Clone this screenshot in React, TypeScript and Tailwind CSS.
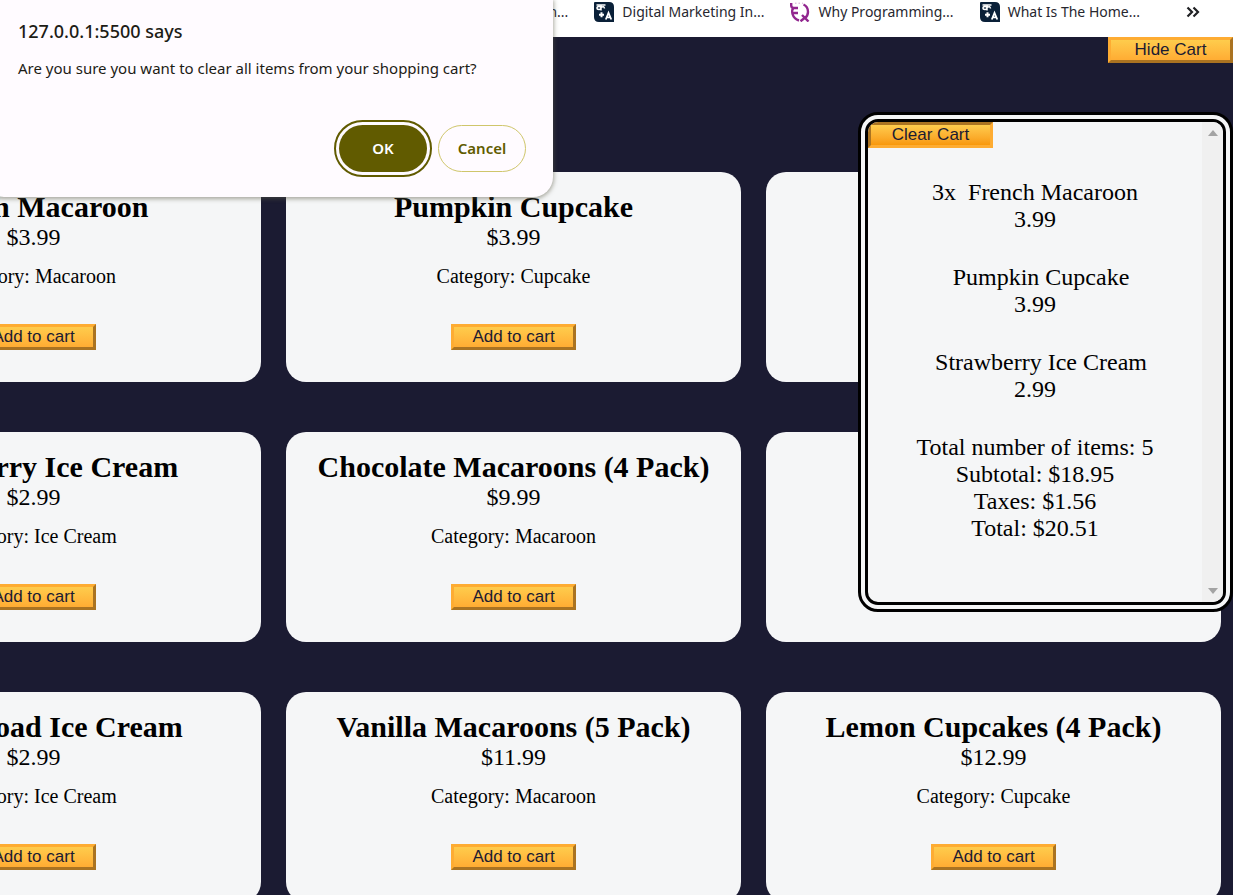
import { ReactNode } from "react";

type Product = { name: string; price: string; category: string };

// A null entry is an empty card that keeps its place in the grid behind the cart.
const products: (Product | null)[] = [
  { name: "French Macaroon", price: "3.99", category: "Macaroon" },
  { name: "Pumpkin Cupcake", price: "3.99", category: "Cupcake" },
  null,
  { name: "Strawberry Ice Cream", price: "2.99", category: "Ice Cream" },
  { name: "Chocolate Macaroons (4 Pack)", price: "9.99", category: "Macaroon" },
  null,
  { name: "Rocky Road Ice Cream", price: "2.99", category: "Ice Cream" },
  { name: "Vanilla Macaroons (5 Pack)", price: "11.99", category: "Macaroon" },
  { name: "Lemon Cupcakes (4 Pack)", price: "12.99", category: "Cupcake" },
];

const cartItems = [
  { count: 3, name: "French Macaroon", price: "3.99" },
  { count: 1, name: "Pumpkin Cupcake", price: "3.99" },
  { count: 1, name: "Strawberry Ice Cream", price: "2.99" },
];

function ShopButton({ children, pressed = false }: { children: ReactNode; pressed?: boolean }) {
  const look = pressed
    ? "to-[#f89808] [border-style:inset]"
    : "to-[#ffac33] [border-style:outset]";
  return (
    <button
      type="button"
      className={`block h-[26px] w-[125px] border-3 border-[#feac32] bg-linear-to-b from-[#fecc4c] font-['Liberation_Sans',sans-serif] text-[17px] leading-5 text-[#1b1b32] ${look}`}
    >
      {children}
    </button>
  );
}

function ProductCard({ name, price, category }: Product) {
  return (
    <article className="flex h-[210px] flex-col items-center rounded-[20px] bg-[#f5f6f7] pt-[19px]">
      <h2 className="text-[30px] leading-8 font-bold whitespace-nowrap">{name}</h2>
      <p className="text-2xl leading-7">${price}</p>
      <p className="mt-[13px] text-xl leading-6">Category: {category}</p>
      <div className="mt-9">
        <ShopButton>Add to cart</ShopButton>
      </div>
    </article>
  );
}

function TranslateIcon() {
  return (
    <svg viewBox="0 0 20 20" className="size-5 shrink-0" aria-hidden="true">
      <path d="M1 0h14q5 0 5 5v15H5q-5 0-5-5V1q0-1 1-1z" fill="#0a2038" />
      <path d="M2.5 3h9M7 3v5.500M3 6q0-1.500 2-1.500T7 6q0 1.500-2 1.500T3 6M7 5.500q3-2 3.500 1" stroke="#fff" strokeWidth="1.500" fill="none" />
      <path d="M7.500 10.200v5M5 12.700h5" stroke="#fff" strokeWidth="2" />
      <path d="M11.800 17.500 14.500 10.800 17.300 17.500M12.800 15.300h3.500" stroke="#fff" strokeWidth="1.800" fill="none" />
    </svg>
  );
}

function QuestionIcon() {
  return (
    <svg viewBox="0 0 20 20" className="size-5 shrink-0" aria-hidden="true" fill="none" stroke="#92278f" strokeWidth="2.400">
      <path d="M1.200 1v2.500Q1.200 6 4 6h4M3.500 5.500Q1.500 8 2.500 12q1.500 5 6.500 6.500M2.500 11H8" />
      <path d="M13.500 2.500q4.500 2 4.500 7.500 0 4-3.500 6.500M12 13l6.500 6.500M10.500 19.300l5-4" />
      <path d="M5 1.200h1.500M8.500 1.200H10M12 1.200h1" strokeWidth="1" opacity="0.400" />
    </svg>
  );
}

function Bookmark({ icon, children }: { icon: ReactNode; children: string }) {
  return (
    <a href="#" className="flex items-center gap-2 whitespace-nowrap">
      {icon}
      <span>{children}</span>
    </a>
  );
}

function BookmarksBar() {
  return (
    <nav
      aria-label="Bookmarks"
      className="flex h-[37px] items-start justify-end gap-[26px] bg-white pr-[33px] font-['Noto_Sans',sans-serif] text-sm leading-6 text-[#27272f]"
    >
      <a href="#">n...</a>
      <Bookmark icon={<TranslateIcon />}>Digital Marketing In...</Bookmark>
      <Bookmark icon={<QuestionIcon />}>Why Programming...</Bookmark>
      <Bookmark icon={<TranslateIcon />}>What Is The Home...</Bookmark>
      <button type="button" aria-label="More bookmarks" className="ml-5 flex h-6 items-center">
        <svg viewBox="0 0 14 12" className="h-3 w-[14px]" fill="none" stroke="#202124" strokeWidth="2.200">
          <path d="M1.500 1.500 6 6l-4.500 4.500M7.500 1.500 12 6l-4.500 4.500" />
        </svg>
      </button>
    </nav>
  );
}

function Cart() {
  return (
    <aside className="absolute top-[75px] right-0 flex h-[500px] w-[375px] overflow-hidden rounded-[20px] border-10 border-double border-black bg-[#f5f6f7]">
      <div className="flex-1">
        <ShopButton pressed>Clear Cart</ShopButton>
        <div className="mt-[31px] text-center text-2xl leading-[27px]">
          <ul className="flex flex-col gap-[31px]">
            {cartItems.map((item) => (
              <li key={item.name}>
                <p className="whitespace-pre">
                  {item.count > 1 ? `${item.count}x  ` : "  "}
                  {item.name}
                </p>
                <p>{item.price}</p>
              </li>
            ))}
          </ul>
          <div className="mt-[31px]">
            <p>Total number of items: 5</p>
            <p>Subtotal: $18.95</p>
            <p>Taxes: $1.56</p>
            <p>Total: $20.51</p>
          </div>
        </div>
      </div>
      <div className="flex w-[21px] flex-col items-center justify-between bg-[#f0f0f0] py-2" aria-hidden="true">
        <svg viewBox="0 0 10 6" className="h-[6px] w-[10px]">
          <path d="M0 6 5 0l5 6z" fill="#a3a3a3" />
        </svg>
        <svg viewBox="0 0 10 6" className="h-[6px] w-[10px]">
          <path d="M0 0h10L5 6z" fill="#a3a3a3" />
        </svg>
      </div>
    </aside>
  );
}

function ConfirmDialog() {
  return (
    <div
      role="alertdialog"
      aria-labelledby="confirm-title"
      aria-describedby="confirm-text"
      className="absolute top-0 -left-4 w-[569px] rounded-b-[20px] bg-[#fffbff] pt-[19px] pr-[27px] pb-[25px] pl-[34px] font-['Noto_Sans',sans-serif] text-[#1d1c16] shadow-[0_1px_4px_1px_rgba(90,90,70,0.5)]"
    >
      <h1 id="confirm-title" className="text-lg leading-6 font-medium">
        127.0.0.1:5500 says
      </h1>
      <p id="confirm-text" className="mt-[13px] text-[15px] leading-6">
        Are you sure you want to clear all items from your shopping cart?
      </p>
      <div className="mt-[45px] flex justify-end gap-[11px] text-[15px] font-semibold">
        <button
          type="button"
          className="h-[47px] w-[88px] rounded-full bg-[#615b00] text-white outline-2 outline-offset-3 outline-[#615b00]"
        >
          OK
        </button>
        <button type="button" className="h-[47px] w-[88px] rounded-full border border-[#cfc66b] text-[#615b00]">
          Cancel
        </button>
      </div>
    </div>
  );
}

export default function App() {
  return (
    <div className="relative h-screen overflow-hidden bg-[#1b1b32] font-['Liberation_Serif',serif] text-black">
      <BookmarksBar />
      <main className="relative">
        <div className="flex justify-end">
          <ShopButton>Hide Cart</ShopButton>
        </div>
        <section
          aria-label="Desserts"
          className="mt-[109px] mr-3 ml-[-194px] grid grid-cols-3 gap-x-[25px] gap-y-[50px]"
        >
          {products.map((product, index) =>
            product ? (
              <ProductCard key={index} {...product} />
            ) : (
              <div key={index} className="rounded-[20px] bg-[#f5f6f7]" />
            ),
          )}
        </section>
        <Cart />
      </main>
      <ConfirmDialog />
    </div>
  );
}
